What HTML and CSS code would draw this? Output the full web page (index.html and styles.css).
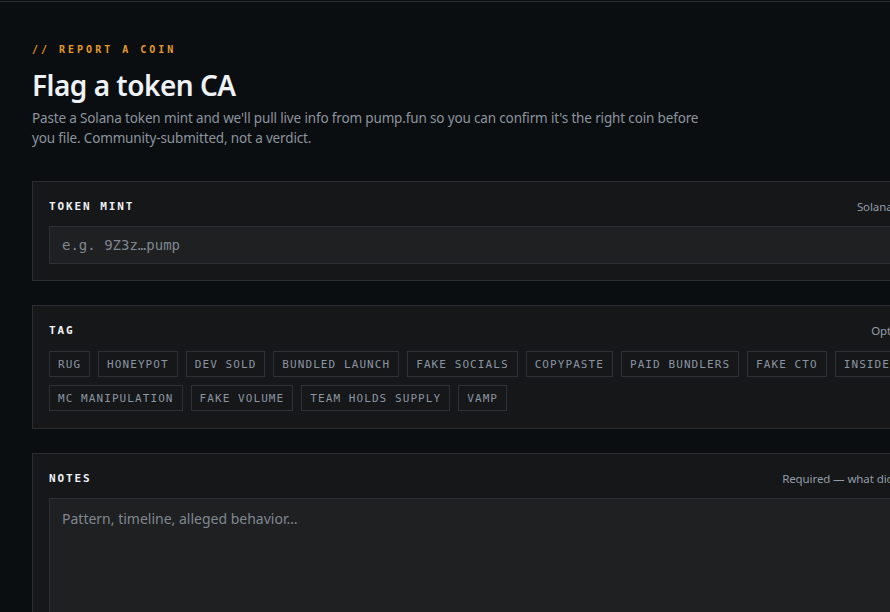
FILE: index.html
```html
<!DOCTYPE html>
<html lang="en">
<head>
<meta charset="utf-8">
<title>Report a coin</title>
<link rel="stylesheet" href="styles.css">
</head>
<body>
<div class="topbar"></div>
<main class="page">
  <header class="intro">
    <p class="eyebrow">// REPORT A COIN</p>
    <h1 class="title">Flag a token CA</h1>
    <p class="lede">Paste a Solana token mint and we'll pull live info from pump.fun so you can confirm it's the right coin before you file. Community-submitted, not a verdict.</p>
  </header>

  <section class="card">
    <div class="card-head">
      <span class="label">TOKEN MINT</span>
      <span class="hint">Solana mint</span>
    </div>
    <input class="field mono" type="text" placeholder="e.g. 9Z3z…pump">
  </section>

  <section class="card">
    <div class="card-head">
      <span class="label">TAG</span>
      <span class="hint">Optional.</span>
    </div>
    <div class="chips">
      <button class="chip">RUG</button>
      <button class="chip">HONEYPOT</button>
      <button class="chip">DEV SOLD</button>
      <button class="chip">BUNDLED LAUNCH</button>
      <button class="chip">FAKE SOCIALS</button>
      <button class="chip">COPYPASTE</button>
      <button class="chip">PAID BUNDLERS</button>
      <button class="chip">FAKE CTO</button>
      <button class="chip">INSIDER</button>
      <button class="chip">MC MANIPULATION</button>
      <button class="chip">FAKE VOLUME</button>
      <button class="chip">TEAM HOLDS SUPPLY</button>
      <button class="chip">VAMP</button>
    </div>
  </section>

  <section class="card">
    <div class="card-head">
      <span class="label">NOTES</span>
      <span class="hint">Required — what did it do</span>
    </div>
    <textarea class="field notes" placeholder="Pattern, timeline, alleged behavior…"></textarea>
  </section>
</main>
</body>
</html>
```

FILE: styles.css
```css
html, body {
  margin: 0;
  padding: 0;
  background: #0b0e10;
  overflow: hidden;
}

body {
  font-family: "Noto Sans", "Open Sans", sans-serif;
  color: #e6edf3;
}

.topbar {
  height: 1px;
  border-bottom: 1px solid #2a2e33;
}

.page {
  width: 905px;
  padding: 40px 32px 40px;
}

.intro {
  margin-bottom: 33px;
}

.eyebrow {
  margin: 0;
  font-family: "DejaVu Sans Mono", monospace;
  font-size: 10px;
  font-weight: bold;
  letter-spacing: 3px;
  line-height: 16px;
  color: #e39a2c;
}

.title {
  margin: 8px 0 0;
  font-size: 28px;
  font-weight: 600;
  line-height: 38px;
  letter-spacing: -0.5px;
  color: #eef2f6;
}

.lede {
  margin: 4px 0 0;
  max-width: 680px;
  font-size: 13.5px;
  line-height: 20px;
  letter-spacing: -0.15px;
  color: #8b949e;
}

.card {
  background: #161719;
  border: 1px solid #2a2d31;
  padding: 16px;
  margin-bottom: 24px;
}

.card-head {
  display: flex;
  justify-content: space-between;
  align-items: center;
  gap: 16px;
  height: 16px;
  margin-bottom: 12px;
}

.label {
  font-family: "DejaVu Sans Mono", monospace;
  font-size: 11px;
  font-weight: bold;
  letter-spacing: 1.9px;
  color: #eef2f6;
}

/* right-hand helper text in each card header */
.hint {
  font-size: 11.5px;
  letter-spacing: -0.1px;
  color: #939ca6;
  white-space: nowrap;
}

.field {
  display: block;
  box-sizing: border-box;
  width: 100%;
  background: #1e2022;
  border: 1px solid #2c2f33;
  color: #e6edf3;
  outline: none;
  margin: 0;
}

.field.mono {
  height: 38px;
  padding: 0 12px;
  font-family: "DejaVu Sans Mono", monospace;
  font-size: 14px;
}

.field::placeholder {
  color: #80878f;
}

.notes {
  height: 130px;
  padding: 10px 12px;
  resize: none;
  font-family: "Noto Sans", "Open Sans", sans-serif;
  font-size: 14px;
  line-height: 20px;
}

.chips {
  display: flex;
  flex-wrap: wrap;
  gap: 8px;
  padding: 1px 0 1px;
}

.chip {
  box-sizing: border-box;
  height: 26px;
  padding: 0 8px;
  margin: 0;
  background: transparent;
  border: 1px solid #2d3035;
  font-family: "DejaVu Sans Mono", monospace;
  font-size: 11px;
  letter-spacing: 1.08px;
  color: #8a95a1;
  cursor: pointer;
}
```
